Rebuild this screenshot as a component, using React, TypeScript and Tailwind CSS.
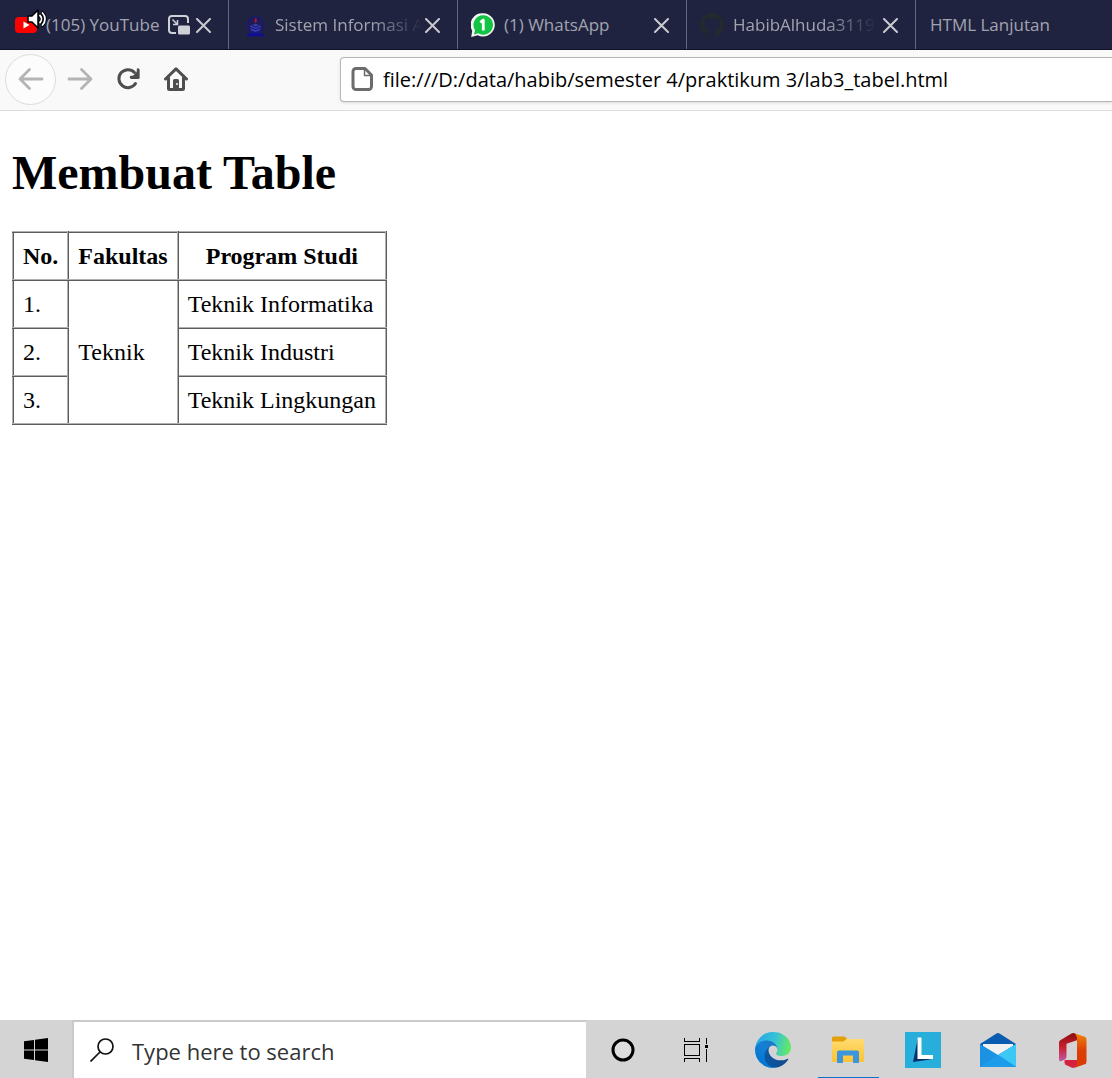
import type { ReactNode } from "react";

function YouTubeIcon() {
  return (
    <svg viewBox="0 0 24 24" className="size-6" aria-hidden="true">
      <rect x="2" y="4" width="22" height="16" rx="4" fill="#ff0000" />
      <path d="M10.500 8.500v7l6-3.500z" fill="#fff" />
    </svg>
  );
}

function SpeakerIcon() {
  return (
    <svg viewBox="0 0 20 20" className="absolute -top-1 left-3.5 size-5" aria-hidden="true">
      <path d="M1 7h4l6-6v18l-6-6H1z" fill="#fff" stroke="#000" strokeWidth="1.500" strokeLinejoin="round" />
      <path d="M13 6.500c2 2 2 5 0 7M15.500 4c3.300 3.500 3.300 8.500 0 12" fill="none" stroke="#000" strokeWidth="3.500" strokeLinecap="round" />
      <path d="M13 6.500c2 2 2 5 0 7M15.500 4c3.300 3.500 3.300 8.500 0 12" fill="none" stroke="#fff" strokeWidth="1.800" strokeLinecap="round" />
    </svg>
  );
}

function CampusIcon() {
  return (
    <svg viewBox="0 0 24 24" className="size-6" aria-hidden="true">
      <circle cx="13.500" cy="12" r="8.500" fill="#1d1c58" stroke="#1a1a70" strokeWidth="1.500" strokeDasharray="2 1" />
      <path d="M5 20.500h17v3H5z" fill="#11108c" />
      <path d="M9 17h9v4H9z" fill="#15148a" />
      <path d="M13.500 10.500 19 13l-1 4.500-4.500 1.500L9 17.500 8 13z" fill="#3a3f9c" />
      <path d="m8.500 14.500 5 2 5-2M10 12.500l3.500 1.500 3.500-1.500" fill="none" stroke="#11108c" />
      <path d="M13.800 4c0 2 1.500 2.500.9 4.500-.3 1.200-2 1.200-2.200 0-.3-1.700 1.300-2.300 1.300-4.500z" fill="#c2152c" />
    </svg>
  );
}

function WhatsAppIcon() {
  return (
    <svg viewBox="0 0 24 24" className="size-6" aria-hidden="true">
      <path d="M12.300.3a11.600 11.600 0 1 1-5.500 21.900L.2 24l1-6.300A11.600 11.600 0 0 1 12.300.3z" fill="#f4f4f4" />
      <path d="M12.300 2.300a9.700 9.700 0 1 1-5 18l-4.300 1.200 1.100-4.200a9.700 9.700 0 0 1 8.200-15z" fill="#12c344" />
      <path d="M9.300 9.300 12.300 7v10.500" fill="none" stroke="#fff" strokeWidth="2.800" strokeLinejoin="round" />
    </svg>
  );
}

function GitHubIcon() {
  return (
    <svg viewBox="0 0 16 16" className="size-6" aria-hidden="true">
      <path
        fill="#24292e"
        d="M8 0C3.580 0 0 3.580 0 8c0 3.540 2.290 6.530 5.470 7.590.4.070.55-.17.55-.38 0-.19-.01-.82-.01-1.490-2.010.37-2.530-.49-2.690-.94-.09-.23-.48-.94-.82-1.130-.28-.15-.68-.52-.01-.53.63-.01 1.080.58 1.230.82.72 1.210 1.870.87 2.330.66.07-.52.28-.87.51-1.070-1.780-.2-3.640-.89-3.640-3.950 0-.87.31-1.590.82-2.150-.08-.2-.36-1.020.08-2.120 0 0 .67-.21 2.200.82.64-.18 1.320-.27 2-.27s1.360.09 2 .27c1.530-1.040 2.200-.82 2.200-.82.44 1.100.16 1.920.08 2.120.51.56.82 1.270.82 2.150 0 3.070-1.870 3.750-3.650 3.950.29.25.54.73.54 1.480 0 1.070-.01 1.930-.01 2.200 0 .21.15.46.55.38A8.010 8.010 0 0 0 16 8c0-4.420-3.580-8-8-8z"
      />
    </svg>
  );
}

function CloseIcon() {
  return (
    <svg viewBox="0 0 15 15" className="size-[15px]" aria-hidden="true">
      <path d="m1 1 13 13M14 1 1 14" stroke="#c9c9d0" strokeWidth="2" strokeLinecap="round" />
    </svg>
  );
}

function PipIcon() {
  return (
    <svg viewBox="0 0 22 20" className="h-5 w-[22px]" aria-hidden="true">
      <path d="M8 18H4a3 3 0 0 1-3-3V4a3 3 0 0 1 3-3h13a3 3 0 0 1 3 3v4" fill="none" stroke="#cfcfd8" strokeWidth="2" />
      <path d="m4.500 4.500 4.500 4.500M9.500 5v4.500H5" fill="none" stroke="#cfcfd8" strokeWidth="1.500" />
      <rect x="10" y="10.500" width="12" height="9" rx="1.500" fill="#cfcfd8" />
    </svg>
  );
}

type TabProps = { title: string; icon?: ReactNode; extra?: ReactNode; fade?: boolean };

function Tab({ title, icon, extra, fade }: TabProps) {
  return (
    <div className="flex w-[229px] shrink-0 items-center border-r border-[#66667f] pt-px pr-[17px] pl-[13px]">
      <button type="button" className="flex h-full min-w-0 flex-1 items-center gap-[9px] text-left">
        <span className="relative shrink-0">{icon}</span>
        <span
          className={
            fade
              ? "flex-1 whitespace-nowrap [mask-image:linear-gradient(to_right,black_65%,transparent)]"
              : "flex-1 whitespace-nowrap"
          }
        >
          {title}
        </span>
      </button>
      {extra}
      <button type="button" aria-label={"Close " + title} className="ml-1.5 shrink-0">
        <CloseIcon />
      </button>
    </div>
  );
}

function TabBar() {
  return (
    <div className="flex h-[50px] overflow-hidden border-b border-[#121228] bg-[#202340] font-['Open_Sans','Noto_Sans',sans-serif] text-[17px] text-[#a2a3af]">
      <Tab
        title="(105) YouTube"
        icon={
          <>
            <YouTubeIcon />
            <SpeakerIcon />
          </>
        }
        extra={
          <button type="button" aria-label="Picture-in-Picture" className="shrink-0">
            <PipIcon />
          </button>
        }
      />
      <Tab title="Sistem Informasi A" icon={<CampusIcon />} fade />
      <Tab title="(1) WhatsApp" icon={<WhatsAppIcon />} />
      <Tab title="HabibAlhuda3119" icon={<GitHubIcon />} fade />
      <button type="button" className="flex-1 px-3.5 pt-px text-left whitespace-nowrap">
        HTML Lanjutan
      </button>
    </div>
  );
}

function NavBar() {
  return (
    <div className="flex h-[61px] items-center border-b border-[#dedede] bg-[#f9f9fa] pb-0.5">
      <button
        type="button"
        aria-label="Back"
        className="ml-[5px] flex size-[51px] shrink-0 items-center justify-center rounded-full border border-[#dcdcdc] bg-[#fcfcfc]"
      >
        <svg viewBox="0 0 26 24" className="h-6 w-[26px]" fill="none" stroke="#b4b4b4" strokeWidth="2.800" strokeLinecap="round" strokeLinejoin="round" aria-hidden="true">
          <path d="M24 12H3M11.500 2.500 2 12l9.500 9.500" />
        </svg>
      </button>
      <button type="button" aria-label="Forward" className="ml-[11px] shrink-0">
        <svg viewBox="0 0 26 24" className="h-6 w-[26px]" fill="none" stroke="#b4b4b4" strokeWidth="2.800" strokeLinecap="round" strokeLinejoin="round" aria-hidden="true">
          <path d="M2 12h21M14.500 2.500 24 12l-9.500 9.500" />
        </svg>
      </button>
      <button type="button" aria-label="Reload" className="ml-[23px] shrink-0">
        <svg viewBox="0 0 24 24" className="size-6" fill="none" stroke="#4e4e4e" strokeWidth="3" strokeLinecap="round" aria-hidden="true">
          <path d="M19.500 16.500A9 9 0 1 1 18.500 5.500" />
          <path d="M23.500 2v9a1 1 0 0 1-1 1h-8.500z" fill="#4e4e4e" stroke="none" />
          <path d="M22 2.500V10h-7" strokeWidth="2.500" />
        </svg>
      </button>
      <button type="button" aria-label="Home" className="ml-6 shrink-0">
        <svg viewBox="0 0 24 24" className="size-6" fill="none" stroke="#4e4e4e" strokeWidth="3" strokeLinecap="round" strokeLinejoin="round" aria-hidden="true">
          <path d="M1.500 12 12 1.800 22.500 12" />
          <path d="M4.500 11v10.500a1 1 0 0 0 1 1h13a1 1 0 0 0 1-1V11" />
          <path d="M9 22v-8.500a1.500 1.500 0 0 1 1.500-1.500h3a1.500 1.500 0 0 1 1.500 1.500V22z" fill="#4e4e4e" stroke="none" />
          <circle cx="13" cy="17" r="1" fill="#f9f9fa" stroke="none" />
        </svg>
      </button>
      <label className="ml-[152px] flex h-[45px] flex-1 items-center gap-2.5 rounded-l-sm border border-r-0 border-[#b8b8b8] bg-white pl-2.5 shadow-sm">
        <svg viewBox="0 0 22 24" className="h-6 w-[22px] shrink-0" fill="none" stroke="#6c6c6c" strokeWidth="3" strokeLinejoin="round" aria-hidden="true">
          <path d="M5 1.500h9L20.500 8v11.500a3 3 0 0 1-3 3H5a3 3 0 0 1-3-3v-15a3 3 0 0 1 3-3z" />
          <path d="M13.500 2v6.500h6.500" strokeWidth="1.500" />
        </svg>
        <input
          type="text"
          aria-label="Address"
          defaultValue="file:///D:/data/habib/semester 4/praktikum 3/lab3_tabel.html"
          className="min-w-0 flex-1 bg-transparent pt-0.5 font-['Open_Sans','Noto_Sans',sans-serif] text-xl text-black outline-none"
        />
      </label>
    </div>
  );
}

const cell = "border-2 border-[#b0b0b0] [border-style:ridge] px-[9px] py-[9px]";

function Page() {
  return (
    <main className="flex-1 bg-white px-3 pt-[34px] font-['Liberation_Serif',serif] text-2xl leading-7 text-black">
      <h1 className="text-5xl leading-14 font-bold">Membuat Table</h1>
      <table className="mt-[30px] border-collapse text-left">
        <thead>
          <tr>
            <th className={cell}>No.</th>
            <th className={cell}>Fakultas</th>
            <th className={cell + " text-center"}>Program Studi</th>
          </tr>
        </thead>
        <tbody>
          <tr>
            <td className={cell}>1.</td>
            <td className={cell} rowSpan={3}>
              Teknik
            </td>
            <td className={cell}>Teknik Informatika</td>
          </tr>
          <tr>
            <td className={cell}>2.</td>
            <td className={cell}>Teknik Industri</td>
          </tr>
          <tr>
            <td className={cell}>3.</td>
            <td className={cell}>Teknik Lingkungan</td>
          </tr>
        </tbody>
      </table>
    </main>
  );
}

function TaskButton({ label, active, children }: { label: string; active?: boolean; children: ReactNode }) {
  return (
    <button type="button" aria-label={label} className="relative flex h-full w-[75px] shrink-0 items-center justify-center pt-0.5 pr-px">
      {children}
      {active && <span className="absolute bottom-0 left-[7px] h-px w-[61px] bg-[#0a74cc]" />}
    </button>
  );
}

function Taskbar() {
  return (
    <footer className="flex h-[58px] items-stretch overflow-hidden bg-[#d4d4d4]">
      <button type="button" aria-label="Start" className="flex w-[72px] shrink-0 items-center justify-center pt-0.5">
        <svg viewBox="0 0 24 24" className="size-6" fill="#000" aria-hidden="true">
          <path d="M0 3.300 10 2v9.500H0zM11 1.800 24 0v11.500H11zM0 12.500h10V22L0 20.700zM11 12.500h13V24l-13-1.800z" />
        </svg>
      </button>
      <label className="flex w-[514px] shrink-0 items-center gap-[18px] border-t-2 border-l-2 border-[#cacaca] bg-white pl-4">
        <svg viewBox="0 0 24 24" className="size-6 shrink-0" fill="none" stroke="#111" strokeWidth="1.700" aria-hidden="true">
          <circle cx="15.500" cy="8.500" r="7.500" />
          <path d="M10 14 .5 23.500" />
        </svg>
        <input
          type="text"
          aria-label="Search"
          placeholder="Type here to search"
          className="min-w-0 flex-1 bg-transparent pt-0.5 font-['Open_Sans','Noto_Sans',sans-serif] text-[22px] text-black outline-none placeholder:text-[#333]"
        />
      </label>
      <TaskButton label="Cortana">
        <svg viewBox="0 0 24 24" className="size-6" aria-hidden="true">
          <circle cx="12" cy="12" r="10" fill="#dedede" stroke="#000" strokeWidth="3" />
        </svg>
      </TaskButton>
      <TaskButton label="Task View">
        <svg viewBox="0 0 24 24" className="mr-1 size-6" fill="none" stroke="#000" shapeRendering="crispEdges" aria-hidden="true">
          <path d="M.5 0v3.500h15V0M.5 24v-3.500h15V24M.5 6.500h15v11H.5zM22.500 0v6M22.500 11v13" />
          <path d="M21 7h3v3h-3z" fill="#000" stroke="none" />
        </svg>
      </TaskButton>
      <TaskButton label="Microsoft Edge">
        <svg viewBox="0 0 256 256" className="size-9" aria-hidden="true">
          <defs>
            <linearGradient id="edge-a" x1="64" y1="178" x2="241" y2="178" gradientUnits="userSpaceOnUse">
              <stop offset="0" stopColor="#0c59a4" />
              <stop offset="1" stopColor="#114a8b" />
            </linearGradient>
            <linearGradient id="edge-b" x1="153" y1="100" x2="45" y2="221" gradientUnits="userSpaceOnUse">
              <stop offset="0" stopColor="#1b78c4" />
              <stop offset=".4" stopColor="#1480d4" />
              <stop offset="1" stopColor="#0078d4" />
            </linearGradient>
            <linearGradient id="edge-c" x1="10" y1="60" x2="250" y2="120" gradientUnits="userSpaceOnUse">
              <stop offset="0" stopColor="#2aa8e6" />
              <stop offset=".5" stopColor="#35c1d8" />
              <stop offset="1" stopColor="#66eb5e" />
            </linearGradient>
          </defs>
          <path fill="url(#edge-a)" d="M231 190.500a93.700 93.700 0 0 1-10.500 4.700 101.900 101.900 0 0 1-35.900 6.400c-47.300 0-88.500-32.500-88.500-74.300a31.500 31.500 0 0 1 16.400-27.300c-42.800 1.800-53.800 46.400-53.800 72.500 0 73.900 68.100 81.400 82.800 81.400 7.900 0 19.800-2.300 27-4.600l1.300-.4a128.300 128.300 0 0 0 66.600-52.800 4 4 0 0 0-5.400-5.600z" />
          <path fill="url(#edge-b)" d="M105.700 241.400a79.200 79.200 0 0 1-22.700-21.300 80.700 80.700 0 0 1 29.500-120c3.200-1.500 8.500-4.100 15.600-4a32.400 32.400 0 0 1 25.700 13 31.900 31.900 0 0 1 6.300 18.700c0-.2 24.500-79.600-80-79.600-43.900 0-80 41.600-80 78.200a130.200 130.200 0 0 0 12.100 56 128 128 0 0 0 156.400 67.100 75.500 75.500 0 0 1-62.800-8z" />
          <path fill="url(#edge-c)" d="M152.300 148.900c-.9 1-3.400 2.500-3.400 5.600 0 2.600 1.700 5.200 4.800 7.300 14.400 10.100 41.700 8.700 41.800 8.700a59.600 59.600 0 0 0 30.300-8.300 61.400 61.400 0 0 0 30.400-52.900c.3-22.400-8-37.300-11.300-43.900C223.500 23.900 177.700 0 128 0A128 128 0 0 0 0 126.200c.5-36.500 36.800-66 80-66 3.500 0 23.500.3 42 10 16.300 8.600 24.900 18.900 30.800 29.200 6.200 10.700 7.300 24.100 7.300 29.500s-2.700 13.300-7.800 20z" />
        </svg>
      </TaskButton>
      <TaskButton label="File Explorer" active>
        <svg viewBox="0 0 32 28" className="h-7 w-8" aria-hidden="true">
          <defs>
            <linearGradient id="folder" x1="0" y1="0" x2="0" y2="1">
              <stop offset="0" stopColor="#ffdb70" />
              <stop offset="1" stopColor="#fcc331" />
            </linearGradient>
          </defs>
          <path d="M0 2a1.500 1.500 0 0 1 1.500-1.500h11L15.500 3v4H0z" fill="#e3a008" />
          <path d="M0 5.500h11.500l3-2.500h16A1.500 1.500 0 0 1 32 4.500v20a1.500 1.500 0 0 1-1.500 1.500h-29A1.500 1.500 0 0 1 0 24.500z" fill="url(#folder)" />
          <path d="M5 27V16.500a2 2 0 0 1 2-2h18a2 2 0 0 1 2 2V27h-6v-7.500H11V27z" fill="#3a96dd" />
        </svg>
      </TaskButton>
      <TaskButton label="Lenovo Vantage">
        <svg viewBox="0 0 36 36" className="size-9" aria-hidden="true">
          <path d="M0 0h36v36H0z" fill="#27aedb" />
          <path d="M13 5.500 8 30l17-2.500 2-1.500H13z" fill="#06306e" />
          <path d="M12.500 5.500h4V23H28v4H12.500z" fill="#fff" />
        </svg>
      </TaskButton>
      <TaskButton label="Mail">
        <svg viewBox="0 0 36 34" className="h-[34px] w-9" aria-hidden="true">
          <path d="M0 11 16.500.5a3 3 0 0 1 3 0L36 11v8H0z" fill="#0a5cb0" />
          <path d="M3 11h30v8L18 24 3 19z" fill="#f1f1f1" />
          <path d="M0 11v23h36V11L18 22z" fill="#1b93e2" />
          <path d="M36 11v23L18 22z" fill="#3bc8f4" />
          <path d="M0 34h36L18 22z" fill="#1d9de9" />
        </svg>
      </TaskButton>
      <TaskButton label="Office">
        <svg viewBox="0 0 28 35" className="h-[35px] w-7" aria-hidden="true">
          <defs>
            <linearGradient id="office-a" x1="0" y1="0" x2="0" y2="1">
              <stop offset="0" stopColor="#8c0f14" />
              <stop offset=".5" stopColor="#c8202c" />
              <stop offset="1" stopColor="#c05aa5" />
            </linearGradient>
            <linearGradient id="office-b" x1="0" y1="0" x2="0" y2="1">
              <stop offset="0" stopColor="#f08207" />
              <stop offset=".5" stopColor="#dc3e05" />
              <stop offset="1" stopColor="#d83b01" />
            </linearGradient>
          </defs>
          <path d="M0 9.500a3 3 0 0 1 1.700-2.600L12.500.5a4 4 0 0 1 3.500 0L18 1.300v6L7.500 10.800V24a3 3 0 0 1-1.500 2.500L2.500 28A1.700 1.700 0 0 1 0 26.500z" fill="url(#office-a)" />
          <path d="M5.500 29a1.500 1.500 0 0 1 1-2H18l3 4-5.500 3.600a4 4 0 0 1-3 0L6 31.500z" fill="#d4213f" />
          <path d="m16 .5 9 3.100a3 3 0 0 1 2.500 3v22a3 3 0 0 1-2.500 3L15 35l3-3V4.500z" fill="url(#office-b)" />
        </svg>
      </TaskButton>
    </footer>
  );
}

export default function App() {
  return (
    <div className="flex min-h-screen flex-col overflow-x-hidden bg-white">
      <TabBar />
      <NavBar />
      <Page />
      <Taskbar />
    </div>
  );
}
